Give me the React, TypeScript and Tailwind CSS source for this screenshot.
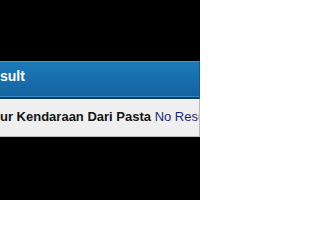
export default function App() {
  return (
    <div className="min-h-[200px] w-[200px] overflow-hidden bg-black pt-[61px] font-['Liberation_Sans',Arial,sans-serif]">
      <div className="w-[200px]">
        {/* header bar */}
        <div className="border-t border-[#4f94cc] border-r border-r-[#0f5a92] bg-gradient-to-b from-[#1d79ba] to-[#12629d]">
          <div className="h-[34px] whitespace-nowrap pt-[6px] text-[14px] font-bold leading-[16px] text-white">
            sult
          </div>
          <div className="h-px bg-[#3f88c0]" />
          <div className="h-[2px] bg-[#0b3f6b]" />
        </div>
        {/* result row */}
        <div className="h-[38px] overflow-hidden whitespace-nowrap border-b border-r border-[#b9b9b9] bg-[#efefef] pt-[10px] text-[13px] leading-[15px]">
          <span className="font-bold text-[#141414]">ur Kendaraan Dari Pasta</span>{" "}
          <span className="text-[#1b2775]">No Result</span>
        </div>
      </div>
    </div>
  )
}
